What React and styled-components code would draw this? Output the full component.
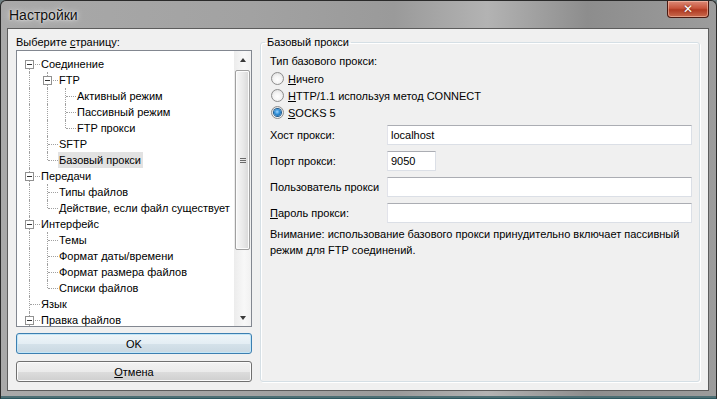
import React from 'react'
import styled, { createGlobalStyle, css } from 'styled-components'

const GlobalStyle = createGlobalStyle`
  html, body {
    margin: 0;
    padding: 0;
    background: #6f7f82;
  }
  body {
    font-family: "Liberation Sans", Arial, sans-serif;
    font-size: 11px;
    color: #000;
  }
`

// only the rows visible in the scrolled list; "more" keeps the root line going below
const tree = [
  { label: 'Соединение', children: [
    { label: 'FTP', children: [
      { label: 'Активный режим' },
      { label: 'Пассивный режим' },
      { label: 'FTP прокси' },
    ] },
    { label: 'SFTP' },
    { label: 'Базовый прокси', selected: true },
  ] },
  { label: 'Передачи', children: [
    { label: 'Типы файлов' },
    { label: 'Действие, если файл существует' },
  ] },
  { label: 'Интерфейс', children: [
    { label: 'Темы' },
    { label: 'Формат даты/времени' },
    { label: 'Формат размера файлов' },
    { label: 'Списки файлов' },
  ] },
  { label: 'Язык' },
  { label: 'Правка файлов', collapsedView: true, more: true },
]

// flatten the tree into rows, remembering which ancestor lines continue
const flatten = (nodes, guides = [], depth = 0, out = []) => {
  nodes.forEach((node, i) => {
    const last = i === nodes.length - 1 && !node.more
    out.push({
      label: node.label,
      selected: node.selected,
      guides,
      last,
      first: depth === 0 && i === 0,
      expandable: !!node.children || node.collapsedView,
    })
    if (node.children) flatten(node.children, [...guides, !last], depth + 1, out)
  })
  return out
}

const rows = flatten(tree)

const Window = styled.div`
  width: 717px;
  height: 399px;
  box-sizing: border-box;
  display: flex;
  flex-direction: column;
  padding: 0 7px 7px 6px;
  border: 1px solid #2a2a2a;
  border-bottom-color: #2c5860;
  border-radius: 6px 6px 0 0;
  background: linear-gradient(90deg, #a9a9a9 0%, #a2a2a2 35%, #9a9a9a 55%, #b3b3b3 68%, #8d8d8d 82%, #9c9c9c 100%);
  box-shadow: inset 0 -2px 0 #4d6f74;
  overflow: hidden;
`

const TitleBar = styled.div`
  height: 27px;
  display: flex;
  justify-content: space-between;
  align-items: flex-start;
  flex-shrink: 0;
`

const Title = styled.div`
  margin: 6px 0 0 2px;
  font-size: 14px;
  color: #101010;
  text-shadow: 0 0 6px rgba(255, 255, 255, 0.9), 0 0 2px rgba(255, 255, 255, 0.8);
`

const CloseButton = styled.div`
  width: 42px;
  height: 17px;
  box-sizing: border-box;
  border: 1px solid #4a1a12;
  border-top: none;
  border-radius: 0 0 4px 4px;
  background: linear-gradient(#dc8a78 0%, #c8553c 45%, #b03a22 55%, #c96a4e 100%);
  box-shadow: inset 0 0 0 1px rgba(255, 210, 190, 0.5);
  display: flex;
  align-items: center;
  justify-content: center;
  color: #fff;
  font-family: "DejaVu Sans", sans-serif;
  font-weight: bold;
  font-size: 12px;
  text-shadow: 0 0 2px #5a1a10;
`

const Client = styled.div`
  flex: 1;
  box-sizing: border-box;
  background: #f0f0f0;
  border: 1px solid #5c5c5c;
  display: grid;
  grid-template-columns: 236px 1fr;
  column-gap: 8px;
  padding: 6px 8px 8px 8px;
  min-height: 0;
`

const LeftColumn = styled.div`
  display: flex;
  flex-direction: column;
  min-height: 0;
`

const Caption = styled.div`
  height: 15px;
  line-height: 14px;
`

const TreeBox = styled.div`
  height: 277px;
  box-sizing: border-box;
  border: 1px solid #828790;
  background: #fff;
  display: flex;
`

const TreeList = styled.div`
  flex: 1;
  overflow: hidden;
  padding: 5px 0 0 4px;
`

const Row = styled.div`
  display: flex;
  align-items: center;
  height: 16px;
  white-space: nowrap;
`

const Cell = styled.span`
  position: relative;
  width: 18px;
  height: 16px;
  flex-shrink: 0;

  ${(p) => p.$line && css`
    &::before {
      content: '';
      position: absolute;
      left: 8px;
      top: 0;
      height: 16px;
      border-left: 1px dotted #a0a0a0;
    }
  `}
`

const Connector = styled.span`
  position: relative;
  width: 18px;
  height: 16px;
  flex-shrink: 0;

  &::before {
    content: '';
    position: absolute;
    left: 8px;
    top: ${(p) => (p.$first ? '8px' : '0')};
    height: ${(p) => (p.$first ? (p.$last ? 0 : 8) : p.$last ? 8 : 16)}px;
    border-left: 1px dotted #a0a0a0;
  }
  &::after {
    content: '';
    position: absolute;
    left: 9px;
    top: 8px;
    width: 10px;
    border-top: 1px dotted #a0a0a0;
  }
`

const Expander = styled.span`
  position: absolute;
  left: 4px;
  top: 4px;
  width: 9px;
  height: 9px;
  box-sizing: border-box;
  border: 1px solid #919191;
  background: #fff;
  z-index: 1;

  &::after {
    content: '';
    position: absolute;
    left: 1px;
    top: 3px;
    width: 5px;
    border-top: 1px solid #333;
  }
`

const Label = styled.span`
  margin-left: 1px;
  padding: 1px 2px 1px 1px;
  line-height: 14px;
  background: ${(p) => (p.$selected ? '#e2e2e2' : 'transparent')};
`

const ScrollBar = styled.div`
  width: 17px;
  flex-shrink: 0;
  display: flex;
  flex-direction: column;
  background: linear-gradient(90deg, #ececec, #f8f8f8 60%, #f1f1f1);
`

const Arrow = styled.div`
  height: 17px;
  flex-shrink: 0;
  display: flex;
  align-items: center;
  justify-content: center;

  &::after {
    content: '';
    border-left: 3px solid transparent;
    border-right: 3px solid transparent;
    ${(p) => (p.$down ? 'border-top: 4px solid #3a3a3a;' : 'border-bottom: 4px solid #3a3a3a;')}
  }
`

const Track = styled.div`
  flex: 1;
  padding: 2px 1px 0 1px;
`

const Thumb = styled.div`
  height: 180px;
  box-sizing: border-box;
  border: 1px solid #a0a0a0;
  border-radius: 2px;
  background: linear-gradient(90deg, #f7f7f7, #e9e9e9 55%, #d8d8d8);
  box-shadow: inset 0 0 0 1px #fcfcfc;
  display: flex;
  align-items: center;
  justify-content: center;
`

const Grip = styled.div`
  width: 6px;
  height: 5px;
  background: repeating-linear-gradient(#6a6a6a 0 1px, transparent 1px 2px);
`

const ButtonStack = styled.div`
  display: flex;
  flex-direction: column;
  gap: 7px;
  margin-top: 6px;
`

const Button = styled.div`
  height: 21px;
  box-sizing: border-box;
  border: 1px solid ${(p) => (p.$default ? '#3c7fb1' : '#707070')};
  border-radius: 3px;
  background: ${(p) => (p.$default
    ? 'linear-gradient(#eef5f9 0%, #e4eef4 50%, #d5e2ea 50%, #c9d8e2 100%)'
    : 'linear-gradient(#f2f2f2 0%, #ebebeb 50%, #dddddd 50%, #cfcfcf 100%)')};
  box-shadow: inset 0 0 0 1px ${(p) => (p.$default ? '#c4e6f7' : '#fbfbfb')};
  display: flex;
  align-items: center;
  justify-content: center;
  line-height: 14px;
`

const Group = styled.fieldset`
  margin: 0;
  padding: 0 7px 0 9px;
  min-width: 0;
  border: 1px solid #d5dfe5;
  border-radius: 3px;
  box-shadow: inset 1px 1px 0 #fff, 1px 1px 0 #fff;
  display: flex;
  flex-direction: column;
`

const Legend = styled.legend`
  margin-left: -5px;
  padding: 0 2px;
  line-height: 15px;
`

const Text = styled.div`
  margin-top: ${(p) => p.$top || 0}px;
  line-height: 14px;
`

const RadioList = styled.div`
  display: flex;
  flex-direction: column;
  margin-top: 2px;
`

const RadioRow = styled.label`
  height: 17px;
  display: flex;
  align-items: center;
  gap: 4px;
`

const RadioDot = styled.span`
  width: 13px;
  height: 13px;
  margin-left: 1px;
  box-sizing: border-box;
  border-radius: 50%;
  border: 1px solid #8d8d8d;
  background: radial-gradient(circle at 50% 60%, #ffffff 0%, #f4f4f4 45%, #d6d6d6 100%);
  display: flex;
  align-items: center;
  justify-content: center;

  &::after {
    content: '';
    width: 7px;
    height: 7px;
    border-radius: 50%;
    display: ${(p) => (p.$checked ? 'block' : 'none')};
    background: radial-gradient(circle at 45% 40%, #9fd6ff 0%, #2f8fd8 45%, #0f4f8a 100%);
    box-shadow: 0 0 0 1px #1d5a8e;
  }
`

const Fields = styled.div`
  display: flex;
  flex-direction: column;
  gap: 6px;
  margin-top: 4px;
`

const FieldRow = styled.div`
  display: grid;
  grid-template-columns: 117px 1fr;
  align-items: center;
  height: 20px;
`

const Input = styled.div`
  height: 20px;
  width: ${(p) => (p.$narrow ? '49px' : 'auto')};
  box-sizing: border-box;
  border: 1px solid #dbdfe6;
  border-top-color: #abadb3;
  border-left-color: #e2e3ea;
  background: #fff;
  padding-left: 3px;
  display: flex;
  align-items: center;
`

const Note = styled.div`
  margin-top: 3px;
  line-height: 16px;
  white-space: nowrap;
`

const TreeRow = ({ row }) => (
  <Row>
    {row.guides.map((g, i) => <Cell key={i} $line={g} />)}
    <Connector $last={row.last} $first={row.first}>
      {row.expandable && <Expander />}
    </Connector>
    <Label $selected={row.selected}>{row.label}</Label>
  </Row>
)

const Field = ({ label, value, narrow }) => (
  <FieldRow>
    <span>{label}</span>
    <Input $narrow={narrow}>{value}</Input>
  </FieldRow>
)

export default function App() {
  return (
    <>
      <GlobalStyle />
      <Window>
        <TitleBar>
          <Title>Настройки</Title>
          <CloseButton>✕</CloseButton>
        </TitleBar>
        <Client>
          <LeftColumn>
            <Caption>Выберите <u>с</u>траницу:</Caption>
            <TreeBox>
              <TreeList>
                {rows.map((r, i) => <TreeRow key={i} row={r} />)}
              </TreeList>
              <ScrollBar>
                <Arrow />
                <Track>
                  <Thumb><Grip /></Thumb>
                </Track>
                <Arrow $down />
              </ScrollBar>
            </TreeBox>
            <ButtonStack>
              <Button $default>OK</Button>
              <Button><span><u>О</u>тмена</span></Button>
            </ButtonStack>
          </LeftColumn>
          <Group>
            <Legend>Базовый прокси</Legend>
            <Text $top={4}>Тип базового прокси:</Text>
            <RadioList>
              <RadioRow><RadioDot /><span><u>Н</u>ичего</span></RadioRow>
              <RadioRow><RadioDot /><span><u>H</u>TTP/1.1 используя метод CONNECT</span></RadioRow>
              <RadioRow><RadioDot $checked /><span><u>S</u>OCKS 5</span></RadioRow>
            </RadioList>
            <Fields>
              <Field label="Хост прокси:" value="localhost" />
              <Field label="Порт прокси:" value="9050" narrow />
              <Field label="Пользователь прокси" value="" />
              <Field label={<><u>П</u>ароль прокси:</>} value="" />
            </Fields>
            <Note>
              Внимание: использование базового прокси принудительно включает пассивный
              <br />
              режим для FTP соединений.
            </Note>
          </Group>
        </Client>
      </Window>
    </>
  )
}
